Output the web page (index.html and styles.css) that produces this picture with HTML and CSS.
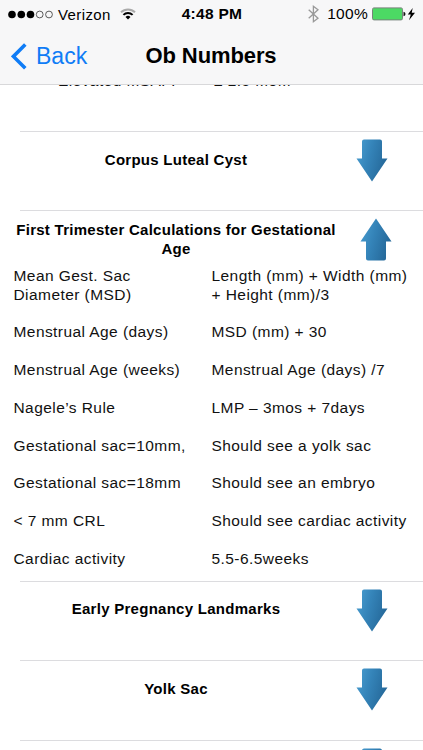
FILE: index.html
```html
<!DOCTYPE html>
<html lang="en">
<head>
    <meta charset="UTF-8">
    <meta name="viewport" content="width=device-width, initial-scale=1.0">
    <title>Ob Numbers</title>
    <link rel="stylesheet" href="styles.css">
</head>
<body>
    <svg class="defs" width="0" height="0">
        <defs>
            <linearGradient id="blue" x1="0" y1="0" x2="1" y2="0.35">
                <stop offset="0" stop-color="#4a9fd2"/>
                <stop offset="0.5" stop-color="#3483b8"/>
                <stop offset="1" stop-color="#266a9b"/>
            </linearGradient>
            <symbol id="arrow-down" viewBox="0 0 32 43">
                <path d="M8 .5h16q2 0 2 2V19.500h5.500L16 42.500.5 19.500H6V2.500q0-2 2-2z" fill="url(#blue)"/>
            </symbol>
            <symbol id="arrow-up" viewBox="0 0 32 43">
                <path d="M16 .5L31.500 23.500H26V40.500q0 2-2 2H8q-2 0-2-2V23.500H.5z" fill="url(#blue)"/>
            </symbol>
        </defs>
    </svg>

    <header class="header">
        <div class="status-bar">
            <div class="status-left">
                <svg class="signal" width="45" height="9" viewBox="0 0 45 9">
                    <circle cx="4" cy="4.500" r="3.800"/>
                    <circle cx="13.300" cy="4.500" r="3.800"/>
                    <circle cx="22.500" cy="4.500" r="3.800"/>
                    <circle class="off" cx="31.700" cy="4.500" r="3.400"/>
                    <circle class="off" cx="41" cy="4.500" r="3.400"/>
                </svg>
                <span class="carrier">Verizon</span>
                <svg class="wifi" width="16" height="12" viewBox="0 0 16 12">
                    <path d="M1 4.300a10 10 0 0 1 14 0" stroke="#aaa"/>
                    <path d="M3.400 6.900a6.600 6.600 0 0 1 9.200 0" stroke="#000"/>
                    <path d="M8 11.500L5.500 9a3.600 3.600 0 0 1 5 0z" fill="#000"/>
                </svg>
            </div>
            <span class="time">4:48 PM</span>
            <div class="status-right">
                <svg class="bluetooth" width="11" height="18" viewBox="0 0 11 18">
                    <path d="M.7 4.700l9.300 8.500L5.400 16.700V1.300L10 4.800.7 13.300"/>
                </svg>
                <span class="percent">100%</span>
                <svg class="battery" width="44" height="14" viewBox="0 0 44 14">
                    <rect x=".5" y=".9" width="30" height="12" rx="1.500" fill="#4cd964" stroke="#77837a"/>
                    <path d="M31.500 4.700q2 .3 2 2.300t-2 2.300z" fill="#111"/>
                    <path d="M40.700 1L35.800 7.600h3L37 13.200l6-7.400h-3.300z" fill="#000"/>
                </svg>
            </div>
        </div>
        <nav class="nav-bar">
            <a class="back" href="#">
                <svg width="16" height="27" viewBox="0 0 16 27">
                    <path d="M14.300 1.500L2.400 13.400 14.300 25.300"/>
                </svg>
                <span>Back</span>
            </a>
            <h1 class="title">Ob Numbers</h1>
        </nav>
    </header>

    <main class="list">
        <div class="values scrolled">
            <span>Elevated MSAFP</span>
            <span>≥ 2.5 MoM</span>
        </div>

        <section class="row">
            <h2 class="row-title">Corpus Luteal Cyst</h2>
            <svg class="arrow"><use href="#arrow-down"/></svg>
        </section>

        <section class="row open">
            <div class="row-head">
                <h2 class="row-title">First Trimester Calculations for Gestational Age</h2>
                <svg class="arrow"><use href="#arrow-up"/></svg>
            </div>
            <div class="values">
                <span>Mean Gest. Sac<br>Diameter (MSD)</span>
                <span>Length (mm) + Width (mm)<br>+ Height (mm)/3</span>
                <span>Menstrual Age (days)</span>
                <span>MSD (mm) + 30</span>
                <span>Menstrual Age (weeks)</span>
                <span>Menstrual Age (days) /7</span>
                <span>Nagele’s Rule</span>
                <span>LMP – 3mos + 7days</span>
                <span>Gestational sac=10mm,</span>
                <span>Should see a yolk sac</span>
                <span>Gestational sac=18mm</span>
                <span>Should see an embryo</span>
                <span>&lt; 7 mm CRL</span>
                <span>Should see cardiac activity</span>
                <span>Cardiac activity</span>
                <span>5.5-6.5weeks</span>
            </div>
        </section>

        <section class="row">
            <h2 class="row-title">Early Pregnancy Landmarks</h2>
            <svg class="arrow"><use href="#arrow-down"/></svg>
        </section>

        <section class="row">
            <h2 class="row-title">Yolk Sac</h2>
            <svg class="arrow"><use href="#arrow-down"/></svg>
        </section>

        <section class="row">
            <h2 class="row-title"></h2>
            <svg class="arrow"><use href="#arrow-down"/></svg>
        </section>
    </main>
</body>
</html>
```
FILE: styles.css
```css
* {
    box-sizing: border-box;
}
body {
    margin: 0;
    height: 750px;
    overflow: hidden;
    display: flex;
    flex-direction: column;
    background: #fff;
    color: #111;
    font-family: "Liberation Sans", Arial, sans-serif;
}
.defs {
    position: absolute;
}

/* header */
.header {
    flex: none;
    height: 85px;
    background: #f7f7f8;
    border-bottom: 1px solid #d8d8da;
    color: #000;
}
.status-bar {
    display: grid;
    grid-template-columns: 1fr auto 1fr;
    align-items: center;
    height: 28px;
    padding: 0 7px 0 8px;
    font-size: 15px;
}
.status-left,
.status-right {
    display: flex;
    align-items: center;
}
.status-right {
    justify-content: flex-end;
}
.carrier {
    margin: 0 9px 0 5px;
    letter-spacing: 0.4px;
}
.signal .off {
    fill: none;
    stroke: #333;
    stroke-width: 0.8;
}
.wifi path {
    fill: none;
    stroke-width: 2;
}
.wifi path:last-child {
    fill: #000;
}
.time {
    font-size: 15.5px;
    font-weight: bold;
    letter-spacing: 0.3px;
}
.bluetooth path {
    fill: none;
    stroke: #999;
    stroke-width: 1.3;
}
.percent {
    margin: 0 4px 0 8px;
    font-size: 15.5px;
    letter-spacing: 0.3px;
}
.nav-bar {
    display: grid;
    grid-template-columns: 1fr auto 1fr;
    align-items: center;
    height: 56px;
    padding: 0 12px 0 11px;
}
.back {
    display: flex;
    align-items: center;
    gap: 9px;
    color: #0f7cf6;
    font-size: 23px;
    text-decoration: none;
}
.back path {
    fill: none;
    stroke: #0f7cf6;
    stroke-width: 3.6;
}
.title {
    margin: 0;
    font-size: 22px;
    font-weight: bold;
    letter-spacing: -0.1px;
}

/* list */
.list {
    flex: 1;
    overflow: hidden;
}
.values {
    display: grid;
    grid-template-columns: 198px 1fr;
    row-gap: 18.75px;
    padding-left: 13px;
    font-size: 15.5px;
    line-height: 19px;
    letter-spacing: 0.43px;
    white-space: nowrap;
}
.scrolled {
    height: 46px;
    padding-left: 58px;
    grid-template-columns: 156px 1fr;
    margin-top: -14px;
    margin-bottom: 14px;
    align-items: start;
}
.row {
    display: flex;
    align-items: flex-start;
    height: 79.4px;
    margin-left: 20px;
    border-top: 1px solid #dcdcdf;
}
.row-title {
    width: 330px;
    margin: 17.5px 0 0 -9px;
    font-size: 15px;
    line-height: 19px;
    font-weight: bold;
    letter-spacing: 0.27px;
    text-align: center;
    color: #000;
}
.arrow {
    width: 32px;
    height: 43px;
    margin: 7px 0 0 15px;
}
.open {
    display: block;
    height: 370.6px;
}
.row-head {
    display: flex;
    align-items: flex-start;
    height: 54.3px;
}
.open .row-title {
    margin-top: 8.5px;
}
.open .arrow {
    margin-left: 19px;
}
.open .values {
    margin-left: -19.5px;
}
```
